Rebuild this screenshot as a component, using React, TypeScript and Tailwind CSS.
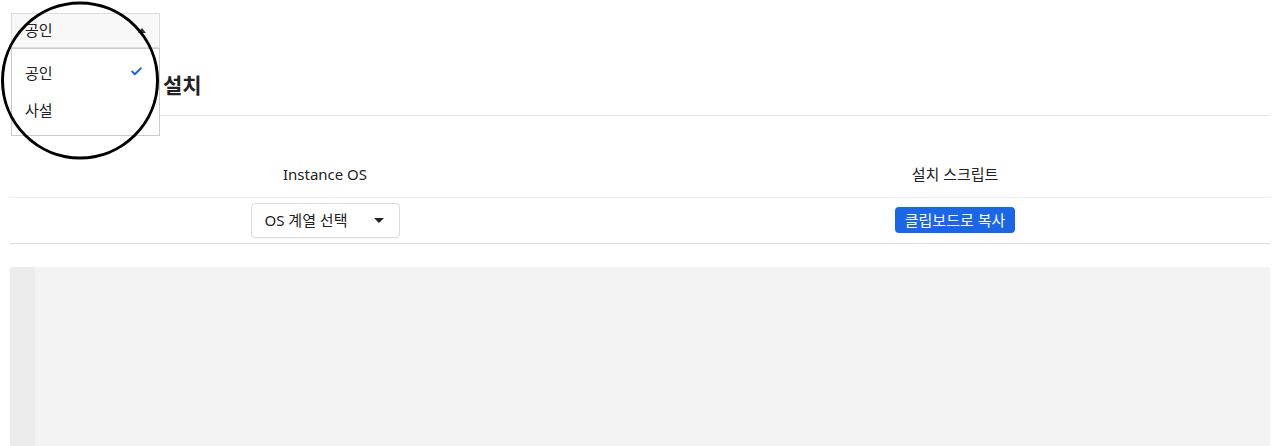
import { Check } from "lucide-react";

export default function App() {
    return (
        <main className="relative h-[446px] overflow-hidden bg-white px-[10px] font-['Noto_Sans','Noto_Sans_CJK_KR',sans-serif] text-[#222]">
            {/* 네트워크 선택 */}
            <div className="relative pt-[13px] pl-px">
                <button className="flex h-[35px] w-[149px] items-center justify-between border border-[#ddd] bg-[#f8f8f8] pl-[13px] pr-[13px] text-[15px]">
                    <span>공인</span>
                    <span className="h-0 w-0 border-x-[4px] border-b-[5px] border-x-transparent border-b-[#333]" />
                </button>
                <ul className="absolute left-px top-[48px] z-10 w-[149px] border border-[#ccc] bg-white py-[6px] text-[15px]">
                    <li className="flex h-[37px] items-center justify-between pl-[13px] pr-[16px]">
                        <span>공인</span>
                        <Check className="size-[13px] -translate-y-[2px] text-[#1a66e8]" strokeWidth={3.5} />
                    </li>
                    <li className="flex h-[37px] items-center pl-[13px]">사설</li>
                </ul>
            </div>

            <div className="border-b border-[#e6e6e6] pb-[16px] pt-[23px]">
                <h2 className="h-7 pl-[153px] text-[21px] font-bold leading-7 text-[#222]">설치</h2>
            </div>

            <table className="mt-[36px] w-full table-fixed text-[15px]">
                <thead>
                    <tr className="h-[45px] border-b border-[#eee]">
                        <th className="font-normal">Instance OS</th>
                        <th className="font-normal">설치 스크립트</th>
                    </tr>
                </thead>
                <tbody>
                    <tr className="h-[46px] border-b border-[#ddd]">
                        <td>
                            <div className="flex justify-center">
                                <button className="flex h-[35px] w-[149px] items-center justify-between rounded-sm border border-[#ddd] bg-white pl-[13px] pr-[15px] text-[15px] shadow-[0_1px_1px_rgba(0,0,0,0.04)]">
                                    <span>OS 계열 선택</span>
                                    <span className="h-0 w-0 border-x-[5px] border-t-[5px] border-x-transparent border-t-[#222]" />
                                </button>
                            </div>
                        </td>
                        <td>
                            <div className="flex justify-center">
                                <button className="h-[26px] w-[120px] rounded-sm bg-[#1a66e8] text-[15px] text-white">
                                    클립보드로 복사
                                </button>
                            </div>
                        </td>
                    </tr>
                </tbody>
            </table>

            <div className="mt-[23px] flex h-[179px] bg-[#f3f3f3]">
                <div className="w-[25px] bg-[#ececec]" />
                <pre className="flex-1" />
            </div>

            <svg
                className="pointer-events-none absolute left-0 top-0 z-20"
                width="162"
                height="162"
                viewBox="0 0 162 162"
            >
                <ellipse cx="80" cy="80.5" rx="77.5" ry="77.5" fill="none" stroke="#000" strokeWidth="3" />
            </svg>
        </main>
    );
}
